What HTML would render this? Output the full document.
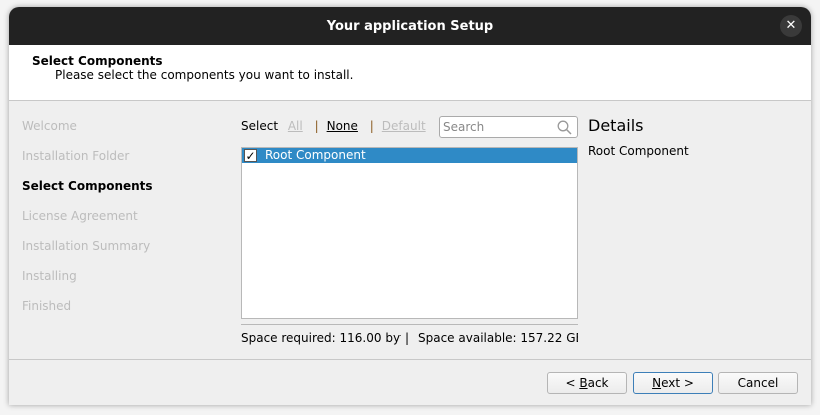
<!DOCTYPE html>
<html><head><style>
*{margin:0;padding:0;box-sizing:border-box}
body{width:820px;height:415px;background:#f4f4f4;font-family:"DejaVu Sans","Liberation Sans",sans-serif;font-size:12px;color:#000;position:relative;overflow:hidden}
.win{position:absolute;left:9px;top:7px;width:802px;height:398px;background:#efefef;border-radius:10px 10px 0 0;overflow:hidden;box-shadow:0 0 6px rgba(0,0,0,.35)}
.title{position:absolute;left:0;top:0;width:802px;height:38px;background:#222;color:#fff;font-weight:bold;font-size:13px;text-align:center;line-height:39px}
.close{position:absolute;left:771px;top:8px;width:22px;height:22px;border-radius:50%;background:#3a3a3a;color:#fff;font-size:13px;line-height:22px;text-align:center}
.head{position:absolute;left:0;top:38px;width:802px;height:56px;background:#fff;border-bottom:1px solid #c8c8c8}
.abs{position:absolute;white-space:nowrap}
.side{color:#bcbcbc}
.list{position:absolute;left:232px;top:140px;width:337px;height:172px;background:#fff;border:1px solid #b8b8b8}
.btn{position:absolute;top:365px;height:22px;width:80px;border:1px solid #b5b5b5;border-radius:3px;background:linear-gradient(#fafafa,#ececec);text-align:center;line-height:20px}
</style></head><body>
<div class="win">
<div class="title">Your application Setup</div>
<div class="close">✕</div>
<div class="head">
<div class="abs" style="left:23px;top:9px;font-weight:bold">Select Components</div>
<div class="abs" style="left:46px;top:23px">Please select the components you want to install.</div>
</div>
<div class="abs side" style="left:13px;top:112px">Welcome</div>
<div class="abs side" style="left:13px;top:142px">Installation Folder</div>
<div class="abs" style="left:13px;top:172px;font-weight:bold">Select Components</div>
<div class="abs side" style="left:13px;top:202px">License Agreement</div>
<div class="abs side" style="left:13px;top:232px">Installation Summary</div>
<div class="abs side" style="left:13px;top:262px">Installing</div>
<div class="abs side" style="left:13px;top:292px">Finished</div>
<div class="abs" style="left:232px;top:112px">Select <span style="color:#bcbcbc;text-decoration:underline;margin-left:6px">All</span> <span style="color:#8a5a20;margin:0 8px">|</span><span style="text-decoration:underline">None</span> <span style="color:#8a5a20;margin:0 8px">|</span><span style="color:#bcbcbc;text-decoration:underline">Default</span></div>
<div class="abs" style="left:430px;top:109px;width:139px;height:22px;background:#fff;border:1px solid #aaa;border-radius:3px;color:#888;padding-left:3px;line-height:20px">Search
<svg style="position:absolute;right:5px;top:3px" width="15" height="15" viewBox="0 0 15 15"><circle cx="6" cy="6" r="4.8" fill="none" stroke="#999" stroke-width="1.3"/><path d="M9.5 9.5L14 14" stroke="#999" stroke-width="1.5"/></svg></div>
<div class="abs" style="left:579px;top:109px;font-size:16px">Details</div>
<div class="abs" style="left:579px;top:137px">Root Component</div>
<div class="list"><div style="height:15px;background:#2f8ac6;color:#fff;position:relative;line-height:14px;padding-left:23px">
<div style="position:absolute;left:2px;top:1px;width:13px;height:13px;background:#fff;border:1px solid #555;color:#000;font-size:12px;line-height:12px;text-align:center;font-weight:bold">✓</div>Root Component</div></div>
<div class="abs" style="left:232px;top:317px;width:337px;height:1px;background:#b8b8b8"></div>
<div class="abs" style="left:232px;top:324px;width:160px;overflow:hidden">Space required: 116.00 bytes</div>
<div class="abs" style="left:396px;top:324px">|</div>
<div class="abs" style="left:409px;top:324px;width:160px;overflow:hidden">Space available: 157.22 GB</div>
<div class="abs" style="left:0;top:352px;width:802px;height:1px;background:#c8c8c8"></div>
<div class="btn" style="left:538px">&lt; <u>B</u>ack</div>
<div class="btn" style="left:624px;border-color:#3d7fb8"><u>N</u>ext &gt;</div>
<div class="btn" style="left:709px">Cancel</div>
</div>
</body></html>
